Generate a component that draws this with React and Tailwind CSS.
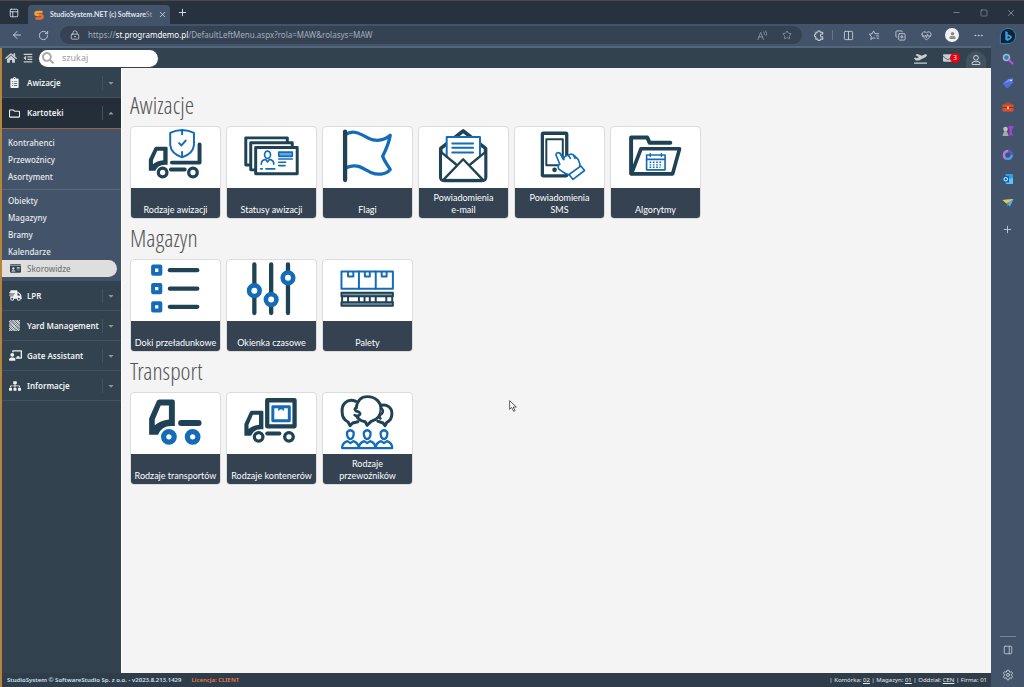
import clsx from 'clsx';
import {
  ArrowLeft,
  Columns2,
  CopyPlus,
  Ellipsis,
  HeartPulse,
  LockKeyhole,
  Minus,
  PanelRight,
  PanelsTopLeft,
  Plus,
  RotateCw,
  Settings,
  Square,
  Star,
  X,
} from 'lucide-react';
import {
  FaCaretDown,
  FaCaretUp,
  FaChalkboardTeacher,
  FaClipboardList,
  FaEnvelope,
  FaHome,
  FaIdCard,
  FaOutdent,
  FaPlaneDeparture,
  FaRegFolder,
  FaRegUser,
  FaSearch,
  FaShippingFast,
  FaSitemap,
  FaUser,
} from 'react-icons/fa';

const DARK = '#1f4254';
const BLUE = '#146cb8';

/* ---------- tile drawings, all on a 270 x 183 canvas ---------- */

function Drawing({ children }) {
  return (
    <svg
      viewBox="0 0 270 183"
      className="w-full h-[61px] block"
      fill="none"
      stroke={DARK}
      strokeLinecap="round"
      strokeLinejoin="round"
      aria-hidden="true"
    >
      {children}
    </svg>
  );
}

function Cab({ transform }) {
  return (
    <path
      transform={transform}
      d="M55 126V76L78 24Q80 19 86 19H127Q133 19 133 25V99H122Q92 99 82 126ZM90 37H115V79Q88 82 72 97V79Z"
      fill={DARK}
      fillRule="evenodd"
      stroke="none"
    />
  );
}

function Wheel({ cx, cy, r = 13, color = DARK, width = 10 }) {
  return <circle cx={cx} cy={cy} r={r} fill="#fff" stroke={color} strokeWidth={width} />;
}

function ShieldTruck() {
  return (
    <Drawing>
      <Cab transform="translate(14 46) scale(0.73 0.68)" />
      <path d="M208 52V107H124M121 128H163" strokeWidth="12" />
      <Wheel cx={96} cy={137} />
      <Wheel cx={188} cy={137} />
      <g stroke={BLUE} strokeWidth="6">
        <path d="M155 8Q176 9 191 17V54Q188 80 155 91Q122 80 119 54V17Q134 9 155 8Z" fill="#fff" />
        <path d="M155 9V21M155 90V75M146 48L153 55L166 40" />
      </g>
    </Drawing>
  );
}

function IdCards() {
  return (
    <Drawing>
      <g fill="#fff" strokeWidth="9">
        <rect x="57" y="32" width="126" height="82" />
        <rect x="72" y="47" width="126" height="82" />
        <rect x="87" y="61" width="126" height="80" />
      </g>
      <g stroke={BLUE} strokeWidth="5">
        <ellipse cx="123" cy="83" rx="9" ry="11" />
        <path d="M104 112Q104 99 117 97L123 105L129 97Q142 99 142 112" />
        <path d="M102 126H107M118 126H145M157 96H198M157 106H178M157 116H176" />
        <rect x="157" y="75" width="41" height="13" fill="#6ba5d8" />
      </g>
    </Drawing>
  );
}

function Flag() {
  return (
    <Drawing>
      <path
        d="M72 20C100 2 128 33 152 38C172 42 190 36 204 24C200 50 190 70 181 88C186 104 196 114 204 128C190 145 165 145 145 137C120 124 100 108 72 122"
        stroke={BLUE}
        strokeWidth="10"
      />
      <path d="M67 13V160" strokeWidth="13" />
    </Drawing>
  );
}

function Envelope() {
  return (
    <Drawing>
      <path d="M134 11L66 64V150Q66 161 77 161H191Q202 161 202 150V64Z" fill="#fff" strokeWidth="11" />
      <path d="M84 88V29H185V88" fill="#fff" stroke={BLUE} strokeWidth="6" />
      <path d="M101 49H164M101 62H164M101 76H164" stroke={BLUE} strokeWidth="6" />
      <path d="M70 76L112 112L134 96L156 112L198 76V156H70Z" fill="#fff" stroke="none" />
      <path d="M68 76L112 112M200 76L156 112M76 157L134 97L192 157" strokeWidth="7" />
    </Drawing>
  );
}

function PhoneTap() {
  return (
    <Drawing>
      <rect x="83" y="18" width="74" height="129" rx="3" strokeWidth="10" />
      <rect x="95" y="36" width="50" height="79" strokeWidth="6" />
      <circle cx="120" cy="129" r="7" fill={DARK} stroke="none" />
      <g fill="#fff" stroke={BLUE} strokeWidth="5">
        <path d="M124 83Q127 73 137 79L147 97Q150 84 162 85Q170 77 180 86L192 98Q199 111 197 126L170 147Q148 140 133 127Q128 115 136 112Z" />
        <path d="M137 79L148 98M162 85L168 94M178 85L182 94" />
        <path d="M164 143L200 117L211 131L176 158Z" />
      </g>
    </Drawing>
  );
}

function FolderCalendar() {
  return (
    <Drawing>
      <path d="M61 140V31H110L117 47H180" strokeWidth="12" />
      <path d="M91 65H208L187 141H62Z" strokeWidth="11" />
      <g stroke={BLUE} strokeWidth="5">
        <rect x="108" y="84" width="56" height="45" />
        <path d="M108 97H164M119 80V88M153 80V88" />
        <path d="M117 106H157M117 114H157M117 121H150" strokeDasharray="5 5" strokeLinecap="butt" strokeWidth="4" />
      </g>
    </Drawing>
  );
}

function SquareList() {
  return (
    <Drawing>
      {[30, 86, 141].map((y) => (
        <g key={y}>
          <rect x="67" y={y - 11} width="22" height="22" stroke={BLUE} strokeWidth="12" />
          <path d={`M118 ${y}H201`} strokeWidth="13" />
        </g>
      ))}
    </Drawing>
  );
}

function Sliders() {
  return (
    <Drawing>
      <path d="M83 12V160M134 12V160M185 12V160" strokeWidth="13" />
      <Wheel cx={83} cy={92} r={16} color={BLUE} width={14} />
      <Wheel cx={134} cy={119} r={16} color={BLUE} width={14} />
      <Wheel cx={185} cy={53} r={16} color={BLUE} width={14} />
    </Drawing>
  );
}

function Pallet() {
  return (
    <Drawing>
      <g stroke={BLUE} strokeWidth="6">
        <rect x="56" y="34" width="156" height="52" />
        <path d="M109 34V86M160 34V86M76 36V49H92V36M127 36V49H142V36M178 36V49H193V36" />
      </g>
      <g strokeWidth="6">
        <path d="M58 110V126M76 110V126M109 110V126M126 110V126M142 110V126M160 110V126M192 110V126M210 110V126" />
        <rect x="56" y="98" width="156" height="11" fill="#7e959c" />
        <rect x="56" y="127" width="156" height="11" fill="#7e959c" />
      </g>
    </Drawing>
  );
}

function Chassis() {
  return (
    <Drawing>
      <Cab />
      <path d="M152 90H205" strokeWidth="18" />
      <Wheel cx={115} cy={132} r={16} color={BLUE} width={16} />
      <Wheel cx={187} cy={132} r={16} color={BLUE} width={16} />
    </Drawing>
  );
}

function ContainerTruck() {
  return (
    <Drawing>
      <Cab transform="translate(12 39) scale(0.74 0.71)" />
      <rect x="122" y="21" width="83" height="79" strokeWidth="13" />
      <rect x="139" y="41" width="50" height="42" stroke={BLUE} strokeWidth="9" />
      <path d="M156 44V52L164 47L172 52V44" fill={BLUE} stroke={BLUE} strokeWidth="2" />
      <path d="M122 122H159" strokeWidth="12" />
      <Wheel cx={96} cy={132} />
      <Wheel cx={188} cy={132} />
    </Drawing>
  );
}

function Talk() {
  return (
    <Drawing>
      <g fill="#fff" strokeWidth="9">
        <path d="M99 24C72 14 56 34 58 56C58 72 66 82 76 87L82 98L90 90L106 86" />
        <path d="M172 38C194 30 210 44 209 62C209 76 202 84 194 88L188 98L182 90L166 84" />
        <path d="M101 44C104 20 118 10 135 10C158 10 176 26 176 48C176 66 164 80 146 85L134 97L128 86C112 84 104 74 100 66" />
        <path d="M101 44Q92 47 101 54Q116 58 112 64Q108 72 96 66M176 46Q186 52 178 62Q166 70 174 76" strokeWidth="8" />
      </g>
      {[83, 134, 185].map((x) => (
        <g key={x} fill="#fff" stroke={BLUE} strokeWidth="7">
          <path d={`M${x - 25} 166Q${x - 25} 150 ${x - 9} 145L${x} 151L${x + 9} 145Q${x + 25} 150 ${x + 25} 166Z`} />
          <path d={`M${x - 10} 118Q${x} 106 ${x + 10} 118V126Q${x + 8} 138 ${x} 139Q${x - 8} 138 ${x - 10} 126Z`} />
        </g>
      ))}
    </Drawing>
  );
}

/* ---------- data ---------- */

const SECTIONS = [
  {
    title: 'Awizacje',
    tiles: [
      { label: 'Rodzaje awizacji', Icon: ShieldTruck },
      { label: 'Statusy awizacji', Icon: IdCards },
      { label: 'Flagi', Icon: Flag },
      { label: 'Powiadomienia e-mail', Icon: Envelope },
      { label: 'Powiadomienia SMS', Icon: PhoneTap, wrap: true },
      { label: 'Algorytmy', Icon: FolderCalendar },
    ],
  },
  {
    title: 'Magazyn',
    tiles: [
      { label: 'Doki przeładunkowe', Icon: SquareList },
      { label: 'Okienka czasowe', Icon: Sliders },
      { label: 'Palety', Icon: Pallet },
    ],
  },
  {
    title: 'Transport',
    tiles: [
      { label: 'Rodzaje transportów', Icon: Chassis },
      { label: 'Rodzaje kontenerów', Icon: ContainerTruck },
      { label: 'Rodzaje przewoźników', Icon: Talk },
    ],
  },
];

function HatchIcon() {
  return (
    <svg viewBox="0 0 12 12" width="11" height="11" stroke="currentColor" aria-hidden="true">
      <path d="M0 2L2 0M0 4L4 0M0 6L6 0M0 8L8 0M0 10L10 0M0 12L12 0M2 12L12 2M4 12L12 4M6 12L12 6M8 12L12 8M10 12L12 10" />
      <path d="M0 9L3 12M0 5L7 12M0 1L11 12M4 0L12 8M8 0L12 4" strokeWidth="0.8" />
    </svg>
  );
}

const MENU_BOTTOM = [
  { label: 'LPR', icon: <FaShippingFast size={13} /> },
  { label: 'Yard Management', icon: <HatchIcon /> },
  { label: 'Gate Assistant', icon: <FaChalkboardTeacher size={13} /> },
  { label: 'Informacje', icon: <FaSitemap size={12} /> },
];

/* ---------- browser window ---------- */

function SLogo() {
  return (
    <svg viewBox="0 0 20 20" width="10" height="10" className="shrink-0" fill="none" strokeWidth="5" aria-hidden="true">
      <path d="M17 4H7Q3 4 3 7Q3 10 7 10H11" stroke="#f5a13b" />
      <path d="M9 10H13Q17 10 17 13Q17 17 13 17H3" stroke="#ee6f2d" />
    </svg>
  );
}

function TitleBar() {
  return (
    <header className="h-6 flex items-stretch bg-[#28323f] border-t border-[#4a4a4a] text-[#dfe4ea]">
      <button aria-label="Karty" className="w-7 flex items-center justify-center">
        <PanelsTopLeft size={10} />
      </button>
      <div className="w-[142px] mt-1 pl-1.5 pr-1 flex items-center gap-1.5 bg-[#43546a] rounded-t">
        <SLogo />
        <span className="flex-1 whitespace-nowrap text-[7px] font-bold font-[Lato,sans-serif]">
          StudioSystem.NET (c) Software<span className="text-[#8d97a3]">St</span>
        </span>
        <button aria-label="Zamknij kartę">
          <X size={9} />
        </button>
      </div>
      <button aria-label="Nowa karta" className="w-6 flex items-center justify-center">
        <Plus size={11} />
      </button>
      <div className="ml-auto flex items-center text-[#8d97a3]">
        <button aria-label="Minimalizuj" className="w-[27px] flex justify-center"><Minus size={9} /></button>
        <button aria-label="Maksymalizuj" className="w-[27px] flex justify-center"><Square size={8} /></button>
        <button aria-label="Zamknij" className="w-[27px] flex justify-center"><X size={10} /></button>
      </div>
    </header>
  );
}

function ExtensionIcon() {
  return (
    <svg viewBox="0 0 24 24" width="11" height="11" fill="none" stroke="currentColor" strokeWidth="2.4" strokeLinejoin="round" aria-hidden="true">
      <path d="M19 9V5H14Q14 2 11 2Q8 2 8 5H4V9Q1 9 1 12Q1 15 4 15V20H8Q8 23 11 23Q14 23 14 20H19V15Q14 16 14 12Q14 8 19 9Z" />
    </svg>
  );
}

function FavoritesIcon() {
  return (
    <svg viewBox="0 0 24 24" width="11" height="11" fill="none" stroke="currentColor" strokeWidth="2" strokeLinejoin="round" aria-hidden="true">
      <path d="M14 18L9 17L4 21L5 14L1 9L7 8L10 2L13 8H22M15 13H22M17 18H22" />
    </svg>
  );
}

function ReadAloudIcon() {
  return (
    <svg viewBox="0 0 24 24" width="11" height="11" fill="none" stroke="currentColor" strokeWidth="2" strokeLinecap="round" aria-hidden="true">
      <path d="M2 21L8 5L14 21M4 15H12M15 4Q17 7 16 10M19 2Q23 7 20 12" />
    </svg>
  );
}

function ToolButton({ label, children }) {
  return (
    <button aria-label={label} className="w-[26px] flex justify-center">
      {children}
    </button>
  );
}

function Toolbar() {
  return (
    <div className="h-6 flex items-center bg-[#43546a] border-b-2 border-[#53667b] text-[#c3cbd5]">
      <button aria-label="Wstecz" className="w-[34px] flex justify-center"><ArrowLeft size={12} /></button>
      <button aria-label="Odśwież" className="w-[18px] flex justify-center"><RotateCw size={11} /></button>
      <div className="flex-1 ml-2 h-[18px] rounded-full bg-[#344254] flex items-center pl-2.5">
        <LockKeyhole size={10} />
        <span className="flex-1 ml-2 text-[8px] text-[#a4aeba]">
          https://<span className="text-white">st.programdemo.pl</span>/DefaultLeftMenu.aspx?rola=MAW&amp;rolasys=MAW
        </span>
        <button aria-label="Czytaj na głos" className="text-[#8794a3] mr-3.5"><ReadAloudIcon /></button>
        <button aria-label="Dodaj do ulubionych" className="mr-2.5 text-[#8794a3]"><Star size={10} /></button>
      </div>
      <div className="flex items-center pl-1">
        <ToolButton label="Rozszerzenia"><ExtensionIcon /></ToolButton>
        <span className="w-px h-2.5 mr-0.5 bg-[#65758a]" />
        <ToolButton label="Podziel ekran"><Columns2 size={11} /></ToolButton>
        <ToolButton label="Ulubione"><FavoritesIcon /></ToolButton>
        <ToolButton label="Kolekcje"><CopyPlus size={11} /></ToolButton>
        <ToolButton label="Podstawy"><HeartPulse size={11} /></ToolButton>
        <ToolButton label="Profil">
          <span className="size-3.5 rounded-full bg-[#f2f2f2] text-[#8b8b8b] flex items-center justify-center">
            <FaUser size={7} />
          </span>
        </ToolButton>
        <ToolButton label="Więcej"><Ellipsis size={11} /></ToolButton>
      </div>
    </div>
  );
}

function BingIcon() {
  return (
    <svg viewBox="0 0 54 54" width="18" height="18" aria-hidden="true">
      <path d="M4 50V27A23 23 0 1 1 27 50Z" fill="#17202c" stroke="#2b86c4" strokeWidth="3" />
      <path d="M19 12L26 15V35L34 31L26 27L24 21L38 27V34L26 42L19 38Z" fill="#2aa5ef" />
    </svg>
  );
}

const RAIL = [
  {
    label: 'Szukaj',
    art: (
      <>
        <circle cx="9" cy="9" r="6" fill="#2a80c0" stroke="#a9b8c6" strokeWidth="3" />
        <path d="M15 15L21 21" stroke="#c44be6" strokeWidth="4" strokeLinecap="round" />
      </>
    ),
  },
  {
    label: 'Zakupy',
    art: (
      <>
        <path d="M2 13L13 4L22 3V11L12 21Q10 22 8 20Z" fill="#6f8ff2" />
        <path d="M2 13L8 20Q10 22 12 21L22 11V7Z" fill="#4e6be0" />
        <circle cx="18" cy="7" r="1.5" fill="#fff" />
      </>
    ),
  },
  {
    label: 'Narzędzia',
    art: (
      <>
        <path d="M8 8V4H16V8" fill="none" stroke="#b34b2c" strokeWidth="2.5" />
        <rect x="1" y="7" width="22" height="14" rx="2" fill="#e0522c" />
        <path d="M1 13H23" stroke="#8f2d17" strokeWidth="2" />
        <rect x="10" y="11" width="4" height="5" fill="#f8c48c" />
      </>
    ),
  },
  {
    label: 'Gry',
    art: (
      <>
        <path d="M13 2H23V6L20 8V16L23 21H12L15 16V8L13 6Z" fill="#a63fd6" />
        <circle cx="7" cy="8" r="4.5" fill="#c2c2c2" />
        <path d="M1 22Q2 16 5 12H9Q12 16 13 22Z" fill="#a8a8a8" />
      </>
    ),
  },
  {
    label: 'Microsoft 365',
    art: (
      <>
        <path d="M13 4Q4 4 4 12Q4 18 8 19" fill="none" stroke="#a77be8" strokeWidth="5" />
        <path d="M13 4Q20 6 20 12" fill="none" stroke="#5a57cf" strokeWidth="5" />
        <path d="M7 19Q18 22 20 12" fill="none" stroke="#4f9be8" strokeWidth="5" />
      </>
    ),
  },
  {
    label: 'Outlook',
    art: (
      <>
        <rect x="7" y="2" width="15" height="20" rx="2" fill="#2f9fe6" />
        <path d="M7 13L22 10V22H9Z" fill="#5cc3f5" />
        <rect x="1" y="6" width="13" height="13" rx="1" fill="#0f5fb5" />
        <circle cx="7.5" cy="12.5" r="3.5" fill="none" stroke="#fff" strokeWidth="2" />
      </>
    ),
  },
  {
    label: 'Upuść',
    art: (
      <>
        <path d="M1 6L23 4L16 19L9 13Z" fill="#4fb3ee" />
        <path d="M1 6L23 4L9 13Z" fill="#f2c14e" />
        <path d="M9 13L14 10L11 20Z" fill="#3aa35c" />
      </>
    ),
  },
];

function Rail() {
  return (
    <aside className="w-[33px] shrink-0 flex flex-col items-center bg-[#43546a] text-[#c3cbd5]">
      <button aria-label="Bing" className="mt-[3px] mb-0.5"><BingIcon /></button>
      {RAIL.map(({ label, art }) => (
        <button key={label} aria-label={label} className="h-6 flex items-center">
          <svg viewBox="0 0 24 24" width="12" height="12" aria-hidden="true">{art}</svg>
        </button>
      ))}
      <button aria-label="Dodaj" className="h-7 flex items-center"><Plus size={11} /></button>
      <div className="mt-auto w-4 border-t border-[#75849a]" />
      <button aria-label="Panel" className="h-[26px] flex items-center"><PanelRight size={10} /></button>
      <button aria-label="Ustawienia" className="h-6 flex items-center"><Settings size={12} /></button>
    </aside>
  );
}

/* ---------- application ---------- */

function AppHeader() {
  return (
    <div className="h-5 flex items-center bg-[#33424f] pl-[3px] text-[#c9ced3]">
      <button aria-label="Start"><FaHome size={12} /></button>
      <button aria-label="Zwiń menu" className="ml-1.5"><FaOutdent size={10} /></button>
      <label className="ml-1.5 w-[119px] h-[17px] rounded-full bg-white flex items-center pl-[3px] text-[#a9a9a9]">
        <FaSearch size={12} className="shrink-0" />
        <input
          aria-label="szukaj"
          placeholder="szukaj"
          className="w-full min-w-0 ml-2 text-[9px] text-[#444] placeholder:text-[#9a9a9a] outline-none"
        />
      </label>
      <div className="ml-auto flex items-center self-stretch">
        <button aria-label="Wysyłki"><FaPlaneDeparture size={13} /></button>
        <button aria-label="Wiadomości: 3" className="relative ml-4 mr-[13px]">
          <FaEnvelope size={10} />
          <span className="absolute left-[7px] top-0 size-2.5 rounded-full bg-[#f0000c] text-white text-[7px] leading-[10px]">
            3
          </span>
        </button>
        <button aria-label="Konto" className="self-end w-5 h-[17px] mr-[5px] rounded-t-full bg-[#43525f] flex items-center justify-center">
          <FaRegUser size={10} />
        </button>
      </div>
    </div>
  );
}

function MenuRow({ icon, label, open }) {
  return (
    <button
      aria-expanded={!!open}
      className={clsx(
        'w-full flex items-center pl-[7px] pr-1.5 border-b text-left text-[8px] font-semibold text-[#f0f2f4]',
        open ? 'h-[31px] bg-[#232e39] border-[#a5623a]' : 'h-[30px] border-[#43525f]'
      )}
    >
      <span className="w-[18px] flex">{icon}</span>
      <span className="flex-1 whitespace-nowrap">{label}</span>
      <span className="h-3.5 pl-1 border-l border-[#43525f] flex items-center text-[#8b959e]">
        {open ? <FaCaretUp size={8} /> : <FaCaretDown size={8} />}
      </span>
    </button>
  );
}

function SubLink({ children }) {
  return (
    <a href="#" className="h-[17px] pl-1.5 flex items-center">
      {children}
    </a>
  );
}

function SideMenu() {
  return (
    <nav className="w-[119px] shrink-0 bg-[#33424f]">
      <MenuRow label="Awizacje" icon={<FaClipboardList size={11} />} />
      <MenuRow open label="Kartoteki" icon={<FaRegFolder size={11} />} />
      <div className="bg-[#43546a] pt-[5px] pb-1 text-[8px] font-medium text-[#e8ebee]">
        <SubLink>Kontrahenci</SubLink>
        <SubLink>Przewoźnicy</SubLink>
        <SubLink>Asortyment</SubLink>
        <div className="mt-1 mb-0.5 border-t border-[#586879]" />
        <SubLink>Obiekty</SubLink>
        <SubLink>Magazyny</SubLink>
        <SubLink>Bramy</SubLink>
        <SubLink>Kalendarze</SubLink>
        <a href="#" className="h-[17px] mr-1 pl-2 flex items-center rounded-r-full bg-[#dedede] text-[#777]">
          <FaIdCard size={11} className="text-[#33424f] mr-1.5" />
          Skorowidze
        </a>
      </div>
      {MENU_BOTTOM.map((item) => (
        <MenuRow key={item.label} {...item} />
      ))}
    </nav>
  );
}

function Tile({ label, Icon, wrap }) {
  return (
    <a href="#" className="w-[91px] border border-[#dcdcdc] rounded-sm bg-white overflow-hidden">
      <Icon />
      <span
        className={clsx(
          'h-[30px] pb-0.5 flex flex-col justify-end bg-[#344252] text-white text-[9px] leading-3 text-center font-[Lato,sans-serif]',
          wrap || label.length > 19 ? 'px-3' : 'px-0.5'
        )}
      >
        {label}
      </span>
    </a>
  );
}

function Footer() {
  return (
    <footer className="h-3.5 flex items-center bg-[#2f3d4b] pl-[5px] pr-1 text-[6px] font-semibold text-[#cfe0ee] whitespace-nowrap">
      <span>StudioSystem © SoftwareStudio Sp. z o.o. - v2023.8.213.1429</span>
      <span className="ml-2.5 text-[#f07b45]">Licencja: CLIENT</span>
      <span className="ml-auto font-normal text-[#e6e9ec]">
        | Komórka: <a href="#" className="underline">02</a> | Magazyn: <a href="#" className="underline">01</a> | Oddział:{' '}
        <a href="#" className="underline">CEN</a> | Firma: 01
      </span>
    </footer>
  );
}

function Pointer() {
  return (
    <svg viewBox="0 0 12 18" width="8" height="12" className="absolute left-[387px] top-[332px]" aria-hidden="true">
      <path d="M1 1V14L4 11L7 17L9 16L6.5 10.5H11Z" fill="#fff" stroke="#333" strokeWidth="1.2" />
    </svg>
  );
}

export default function App() {
  return (
    <div className="min-h-screen flex flex-col bg-[#28323f] font-['Noto_Sans','Open_Sans',sans-serif]">
      <TitleBar />
      <div className="flex-1 flex">
        <div className="flex-1 min-w-0 flex flex-col">
          <Toolbar />
          <div className="flex-1 flex flex-col border-l-2 border-[#b8843a]">
            <AppHeader />
            <div className="flex-1 flex">
              <SideMenu />
              <main className="relative flex-1 bg-[#f4f4f4] border-l border-white pl-2 pt-[23px]">
                {SECTIONS.map(({ title, tiles }) => (
                  <section key={title} className="mb-[5px]">
                    <h2 className="h-[35px] leading-7 text-2xl font-light text-[#555] font-['Open_Sans_Condensed_Light','Open_Sans_Light_Condensed','Liberation_Sans_Narrow',sans-serif]">
                      {title}
                    </h2>
                    <div className="flex flex-wrap gap-[5px]">
                      {tiles.map((tile) => (
                        <Tile key={tile.label} {...tile} />
                      ))}
                    </div>
                  </section>
                ))}
                <Pointer />
              </main>
            </div>
            <Footer />
          </div>
        </div>
        <Rail />
      </div>
    </div>
  );
}
